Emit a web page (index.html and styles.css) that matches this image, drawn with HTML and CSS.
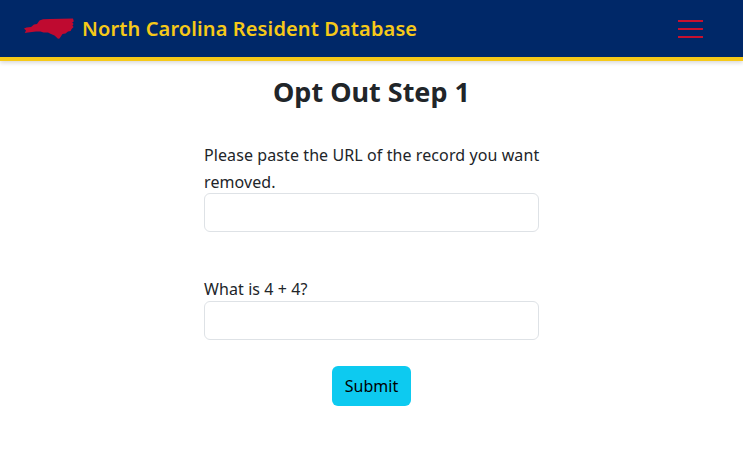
FILE: index.html
```html
<!DOCTYPE html>
<html lang="en">
<head>
<meta charset="utf-8">
<title>Opt Out Step 1</title>
<link rel="stylesheet" href="styles.css">
</head>
<body>
<header class="navbar">
  <a class="brand" href="#">
    <svg class="state" viewBox="0 0 50 21" aria-hidden="true"><path d="M0 10.6 2.5 9.6 7 9 10 6.5 13 6 15.5 2.5 19 1.2 26 1 49 .6 49.8 3.5 48.2 4.2 49.6 6 48.4 7.6 49.6 9 47.6 11 46.6 13 44 13.4 41.5 15.5 38.5 16 35.5 20.6 34 20.8 30.5 17.5 27 16 24 14.6 19.5 14.6 16.5 13.6 12 13.6 8 14 4 14.4 0.8 15 2 12.5Z"/></svg>
    <span>North Carolina Resident Database</span>
  </a>
  <button class="toggler" type="button" aria-label="Menu"><i></i><i></i><i></i></button>
</header>
<main class="content">
  <h1>Opt Out Step 1</h1>
  <form class="form">
    <label class="field field-url">
      <span>Please paste the URL of the record you want removed.</span>
      <input type="text">
    </label>
    <label class="field field-sum">
      <span>What is 4 + 4?</span>
      <input type="text">
    </label>
    <button class="submit" type="button">Submit</button>
  </form>
</main>
</body>
</html>
```
FILE: styles.css
```css
* { box-sizing: border-box; }
html, body { margin: 0; padding: 0; }
body {
  background: #fff;
  color: #212529;
  font-family: "Noto Sans", "Open Sans", sans-serif;
  font-size: 16px;
  line-height: 1.5;
}
.navbar {
  height: 61px;
  background: #002868;
  border-bottom: 4px solid #f6c918;
  box-shadow: 0 2px 4px rgba(0, 0, 0, .15);
  display: flex;
  align-items: center;
  justify-content: space-between;
  padding: 0 40px 0 24px;
}
.brand {
  display: flex;
  align-items: center;
  gap: 8px;
  color: #f6c918;
  text-decoration: none;
  font-size: 20px;
  font-weight: 600;
  letter-spacing: .12px;
}
.state { width: 50px; height: 21px; fill: #bf0a30; flex: none; }
.toggler {
  width: 25px;
  display: flex;
  flex-direction: column;
  gap: 6px;
  padding: 0;
  background: none;
  border: 0;
}
.toggler i { display: block; height: 2px; background: #c8102e; }
.content { display: flex; flex-direction: column; align-items: center; }
h1 {
  margin: 13px 0 0;
  font-size: 27px;
  font-weight: 700;
  line-height: 36px;
}
.form { width: 335px; margin-top: 32px; display: flex; flex-direction: column; letter-spacing: .09px; }
.field { display: block; }
.field span { display: block; line-height: 27px; margin-right: -6px; }
.field-url span { margin-bottom: -3px; }
.field-sum span { margin-bottom: -2px; }
.field-url { margin-bottom: 44px; }
.field-sum { margin-bottom: 26px; }
.field input {
  display: block;
  width: 100%;
  height: 39px;
  border: 1px solid #dee2e6;
  border-radius: 6px;
  background: #fff;
}
.submit {
  align-self: center;
  height: 40px;
  width: 79px;
  border: 0;
  border-radius: 6px;
  background: #0dcaf0;
  color: #000;
  font: inherit;
  padding: 0;
}
```
